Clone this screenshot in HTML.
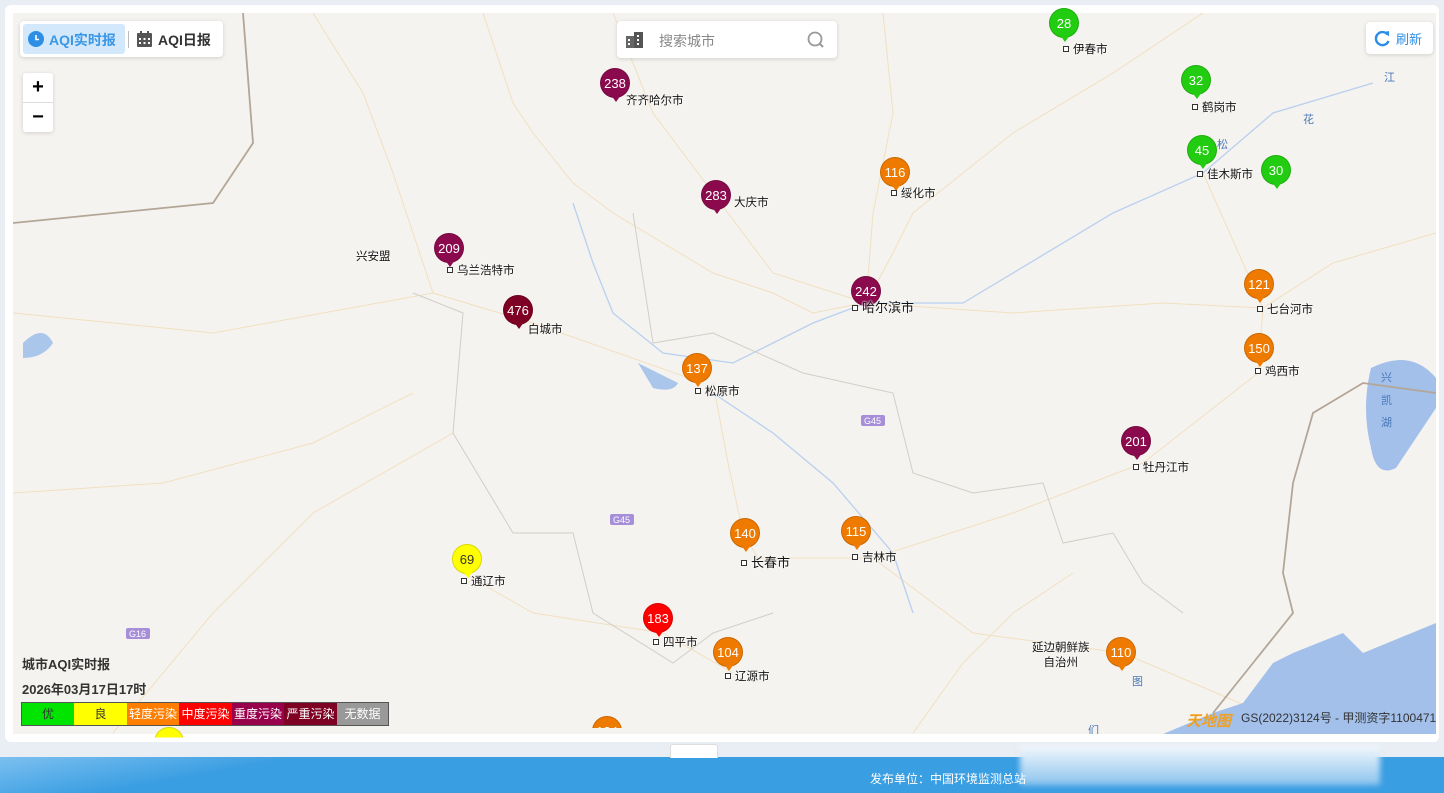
<!DOCTYPE html>
<html><head><meta charset="utf-8"><style>
*{margin:0;padding:0;box-sizing:border-box}
body{width:1444px;height:793px;overflow:hidden;background:#e9edf4;font-family:"Liberation Sans","Noto Sans CJK SC",sans-serif;position:relative}
.card{position:absolute;left:5px;top:5px;width:1434px;height:737px;background:#fff;border-radius:6px}
.map{position:absolute;left:13px;top:13px;width:1423px;height:721px;background:#f5f3ef;overflow:hidden}
.pin{position:absolute;width:30px;height:30px;border-radius:50%;color:#fff;font-size:13px;line-height:30px;text-align:center;margin-left:-15px;margin-top:-15px;border:1px solid rgba(0,0,0,.15)}
.pin:after{content:"";position:absolute;left:10px;top:26px;border-left:5px solid transparent;border-right:5px solid transparent;border-top:7px solid var(--c)}
.lb{position:absolute;font-size:11.5px;color:#111;text-shadow:0 0 2px #fff,0 0 2px #fff;white-space:nowrap}
.lb i{display:inline-block;width:6px;height:6px;border:1px solid #333;background:#fff;margin-right:4px;vertical-align:1px}
.box{position:absolute;background:#fff;border-radius:4px;box-shadow:0 1px 4px rgba(0,0,0,.15)}
</style></head><body>
<div class="card"></div>
<div class="map">
<svg width="1423" height="721" style="position:absolute;left:0;top:0" fill="none">
<g stroke="#f1e0c0" stroke-width="1">
<path d="M470 0 L500 90 L520 120 L560 170 L600 200 L650 230 L700 260 L760 280 L800 300 L850 290"/><path d="M600 0 L620 50 L640 100 L700 180 L730 220 L760 260 L853 290"/>
<path d="M853 290 L880 240 L900 200 L1000 120 L1100 60 L1190 0"/><path d="M853 290 L1000 300 L1150 290 L1250 295"/>
<path d="M700 370 L715 450 L730 520 L745 545 L860 545 L1000 500 L1130 450"/><path d="M450 560 L520 600 L650 620 L720 660"/>
<path d="M0 300 L200 320 L420 280 L520 310 L690 370"/><path d="M100 720 L200 600 L300 500 L440 420"/>
<path d="M860 545 L960 620 L1110 640 L1250 700"/><path d="M1130 450 L1245 360 L1250 295 L1190 160"/>
<path d="M0 480 L150 470 L300 430 L400 380"/><path d="M900 720 L950 650 L1000 600 L1060 560"/><path d="M1250 295 L1320 250 L1423 220"/>
<path d="M853 290 L860 200 L880 100 L870 0"/><path d="M300 0 L350 80 L380 160 L420 280"/>
</g>
<g stroke="#b8d0ef" stroke-width="1.3"><path d="M560 190 L580 250 L600 300 L650 340 L720 350 L800 310 L853 290 L950 290 L1100 200 L1190 160 L1260 100 L1360 70"/>
<path d="M700 380 L760 420 L820 470 L880 540 L900 600"/></g>
<path d="M625 350 q20 10 40 20 q-5 10 -25 5z" fill="#aac6ea"/>
<path d="M10 330 q20 -20 30 0 q-10 15 -30 15z" fill="#aac6ea"/>
<path d="M1358 355 q40 -20 65 10 l0 30 q-20 30 -40 60 q-20 10 -25 -20 q-10 -40 0 -80z" fill="#a3c0ea"/>
<path d="M1150 721 L1200 700 L1230 690 L1260 650 L1280 640 L1330 620 L1350 640 L1423 610 L1423 721z" fill="#a3c0ea"/>
<g stroke="#b4a697" stroke-width="1.8"><path d="M230 0 L240 130 L200 190 L0 210"/><path d="M1423 380 L1350 370 L1300 400 L1280 470 L1270 560 L1280 600 L1240 650 L1200 700"/></g>
<g stroke="#d2cec9" stroke-width="1"><path d="M400 280 L450 300 L440 420 L500 520 L560 520 L580 600 L660 650 L700 620 L760 600"/><path d="M620 200 L640 330 L700 320 L790 360 L880 380 L900 460 L960 480"/><path d="M960 480 L1030 470 L1050 530 L1100 520 L1130 570 L1170 600"/></g>
<rect x="597" y="501" width="24" height="11" rx="2" fill="#a78ed8"/><text x="600" y="510" font-size="9" fill="#fff">G45</text>
<rect x="848" y="402" width="24" height="11" rx="2" fill="#a78ed8"/><text x="851" y="411" font-size="9" fill="#fff">G45</text>
<rect x="113" y="615" width="24" height="11" rx="2" fill="#a78ed8"/><text x="116" y="624" font-size="9" fill="#fff">G16</text>
<text x="1368" y="368" font-size="11" fill="#4a78b8">兴</text><text x="1368" y="391" font-size="11" fill="#4a78b8">凯</text><text x="1368" y="413" font-size="11" fill="#4a78b8">湖</text>
<text x="1204" y="135" font-size="11" fill="#4a78b8">松</text><text x="1290" y="110" font-size="11" fill="#4a78b8">花</text><text x="1371" y="68" font-size="11" fill="#4a78b8">江</text>
<text x="1119" y="672" font-size="11" fill="#4a78b8">图</text><text x="1075" y="721" font-size="11" fill="#4a78b8">们</text>
</svg>
</div>
<div id="m" style="position:absolute;left:0;top:0">
<div class="pin" style="left:1064px;top:23px;background:#22cc11;--c:#22cc11">28</div><div class="lb" style="left:1063px;top:41px"><i></i>伊春市</div>
<div class="pin" style="left:615px;top:83px;background:#8b0a4d;--c:#8b0a4d">238</div><div class="lb" style="left:626px;top:92px">齐齐哈尔市</div>
<div class="pin" style="left:1196px;top:80px;background:#22cc11;--c:#22cc11">32</div><div class="lb" style="left:1192px;top:99px"><i></i>鹤岗市</div>
<div class="pin" style="left:1202px;top:150px;background:#22cc11;--c:#22cc11">45</div><div class="lb" style="left:1197px;top:166px"><i></i>佳木斯市</div>
<div class="pin" style="left:1276px;top:170px;background:#22cc11;--c:#22cc11">30</div>
<div class="pin" style="left:895px;top:172px;background:#ef7a00;--c:#ef7a00">116</div><div class="lb" style="left:891px;top:185px"><i></i>绥化市</div>
<div class="pin" style="left:716px;top:195px;background:#8b0a4d;--c:#8b0a4d">283</div><div class="lb" style="left:734px;top:194px">大庆市</div>
<div class="lb" style="left:356px;top:248px">兴安盟</div>
<div class="pin" style="left:449px;top:248px;background:#8b0a4d;--c:#8b0a4d">209</div><div class="lb" style="left:447px;top:262px"><i></i>乌兰浩特市</div>
<div class="pin" style="left:518px;top:310px;background:#7e0023;--c:#7e0023">476</div><div class="lb" style="left:528px;top:321px">白城市</div>
<div class="pin" style="left:866px;top:291px;background:#8b0a4d;--c:#8b0a4d">242</div><div class="lb" style="left:852px;top:297px;font-size:13px"><i></i>哈尔滨市</div>
<div class="pin" style="left:1259px;top:284px;background:#ef7a00;--c:#ef7a00">121</div><div class="lb" style="left:1257px;top:301px"><i></i>七台河市</div>
<div class="pin" style="left:697px;top:368px;background:#ef7a00;--c:#ef7a00">137</div><div class="lb" style="left:695px;top:383px"><i></i>松原市</div>
<div class="pin" style="left:1259px;top:348px;background:#ef7a00;--c:#ef7a00">150</div><div class="lb" style="left:1255px;top:363px"><i></i>鸡西市</div>
<div class="pin" style="left:1136px;top:441px;background:#8b0a4d;--c:#8b0a4d">201</div><div class="lb" style="left:1133px;top:459px"><i></i>牡丹江市</div>
<div class="pin" style="left:745px;top:533px;background:#ef7a00;--c:#ef7a00">140</div><div class="lb" style="left:741px;top:552px;font-size:13px"><i></i>长春市</div>
<div class="pin" style="left:856px;top:531px;background:#ef7a00;--c:#ef7a00">115</div><div class="lb" style="left:852px;top:549px"><i></i>吉林市</div>
<div class="pin" style="left:467px;top:559px;background:#ffff00;--c:#ffff00;color:#333">69</div><div class="lb" style="left:461px;top:573px"><i></i>通辽市</div>
<div class="pin" style="left:658px;top:618px;background:#ff0000;--c:#ff0000">183</div><div class="lb" style="left:653px;top:634px"><i></i>四平市</div>
<div class="pin" style="left:728px;top:652px;background:#ef7a00;--c:#ef7a00">104</div><div class="lb" style="left:725px;top:668px"><i></i>辽源市</div>
<div class="lb" style="left:1032px;top:641px;text-align:center;line-height:15px">延边朝鲜族<br>自治州</div>
<div class="pin" style="left:1121px;top:652px;background:#ef7a00;--c:#ef7a00">110</div>
</div>
<div style="position:absolute;left:13px;top:734px;width:1423px;height:8px;background:#fff"></div>
<div class="pin" style="left:607px;top:731px;background:#ef7a00;clip-path:inset(0 0 60% 0)">124</div>
<div class="pin" style="left:169px;top:742px;background:#ffff00;color:#333;clip-path:inset(0 0 65% 0)">70</div>
<div class="box" style="left:20px;top:21px;width:203px;height:36px">
<div style="position:absolute;left:3px;top:3px;width:102px;height:30px;background:#d4e8fb;border-radius:3px"></div>
<svg style="position:absolute;left:8px;top:10px" width="16" height="16"><circle cx="8" cy="8" r="8" fill="#2d8ee6"/><path d="M8 4 V8.5 H11" stroke="#fff" stroke-width="1.6" fill="none"/></svg>
<div style="position:absolute;left:29px;top:9px;font-size:14px;font-weight:bold;color:#3a97e6">AQI实时报</div>
<div style="position:absolute;left:108px;top:10px;width:1px;height:17px;background:#bbb"></div>
<svg style="position:absolute;left:117px;top:10px" width="15" height="16"><rect x="0" y="2" width="15" height="14" rx="1" fill="#555"/><rect x="3" y="0" width="2" height="4" fill="#555"/><rect x="10" y="0" width="2" height="4" fill="#555"/><g fill="#fff"><rect x="2" y="7" width="2" height="2"/><rect x="6.5" y="7" width="2" height="2"/><rect x="11" y="7" width="2" height="2"/><rect x="2" y="11" width="2" height="2"/><rect x="6.5" y="11" width="2" height="2"/><rect x="11" y="11" width="2" height="2"/></g></svg>
<div style="position:absolute;left:138px;top:9px;font-size:14px;font-weight:bold;color:#333">AQI日报</div>
</div>
<div class="box" style="left:617px;top:21px;width:220px;height:37px">
<svg style="position:absolute;left:9px;top:10px" width="18" height="17"><rect x="0" y="5" width="8" height="12" fill="#666"/><rect x="8" y="1" width="9" height="16" fill="#555"/><g fill="#fff"><rect x="2" y="8" width="2" height="2"/><rect x="2" y="12" width="2" height="2"/><rect x="11" y="4" width="2" height="2"/><rect x="11" y="8" width="2" height="2"/><rect x="11" y="12" width="2" height="2"/></g></svg>
<div style="position:absolute;left:42px;top:10px;font-size:14px;color:#888">搜索城市</div>
<svg style="position:absolute;left:190px;top:10px" width="18" height="18"><circle cx="8" cy="8" r="6.5" stroke="#999" stroke-width="1.8" fill="none"/><path d="M12.5 12.5 L16 16" stroke="#999" stroke-width="2"/></svg>
</div>
<div class="box" style="left:1366px;top:22px;width:67px;height:32px">
<svg style="position:absolute;left:8px;top:8px" width="17" height="17"><path d="M13.5 4.5 A6.5 6.5 0 1 0 14.5 11" stroke="#2d8ee6" stroke-width="2.4" fill="none"/><path d="M10 2 L15 1 L15 6.5z" fill="#2d8ee6"/></svg>
<div style="position:absolute;left:30px;top:7px;font-size:13px;color:#2d8ee6">刷新</div>
</div>
<div class="box" style="left:23px;top:73px;width:30px;height:59px;border-radius:3px">
<div style="text-align:center;font-size:20px;line-height:29px;font-weight:bold">+</div><div style="border-top:1px solid #ddd;text-align:center;font-size:20px;line-height:28px;font-weight:bold">−</div></div>
<div style="position:absolute;left:22px;top:654px;font-size:13px;font-weight:bold;color:#333">城市AQI实时报</div>
<div style="position:absolute;left:22px;top:679px;font-size:13px;font-weight:bold;color:#333">2026年03月17日17时</div>
<div style="position:absolute;left:21px;top:702px;display:flex;height:24px;font-size:12px;line-height:22px;text-align:center;border:1px solid #555">
<div style="width:52px;background:#00e400;color:#333">优</div><div style="width:53px;background:#ffff00;color:#333">良</div><div style="width:52px;background:#ff7e00;color:#fff">轻度污染</div><div style="width:53px;background:#ff0000;color:#fff">中度污染</div><div style="width:52px;background:#99004c;color:#fff">重度污染</div><div style="width:53px;background:#7e0023;color:#fff">严重污染</div><div style="width:51px;background:#999;color:#fff">无数据</div></div>
<div style="position:absolute;left:1186px;top:710px;font-size:15px;font-weight:bold;color:#f0a020;font-style:italic">天地图</div>
<div style="position:absolute;left:1241px;top:709px;font-size:12px;color:#333">GS(2022)3124号 - 甲测资字1100471</div>
<div style="position:absolute;left:0;top:757px;width:1444px;height:36px;background:#3a9ee2"></div>
<div style="position:absolute;left:0;top:757px;width:300px;height:36px;background:linear-gradient(170deg,#7cc0f0 0%,#3a9ee2 60%)"></div>
<div style="position:absolute;left:670px;top:744px;width:48px;height:14px;background:#fff;border:1px solid #ddd;border-bottom:none;border-radius:3px 3px 0 0"></div>
<div style="position:absolute;left:1020px;top:745px;width:360px;height:40px;background:linear-gradient(#f4f8fc,#8cc4ee);filter:blur(3px)"></div>
<div style="position:absolute;left:870px;top:770px;font-size:12px;color:#fff">发布单位：中国环境监测总站</div>
</body></html>
